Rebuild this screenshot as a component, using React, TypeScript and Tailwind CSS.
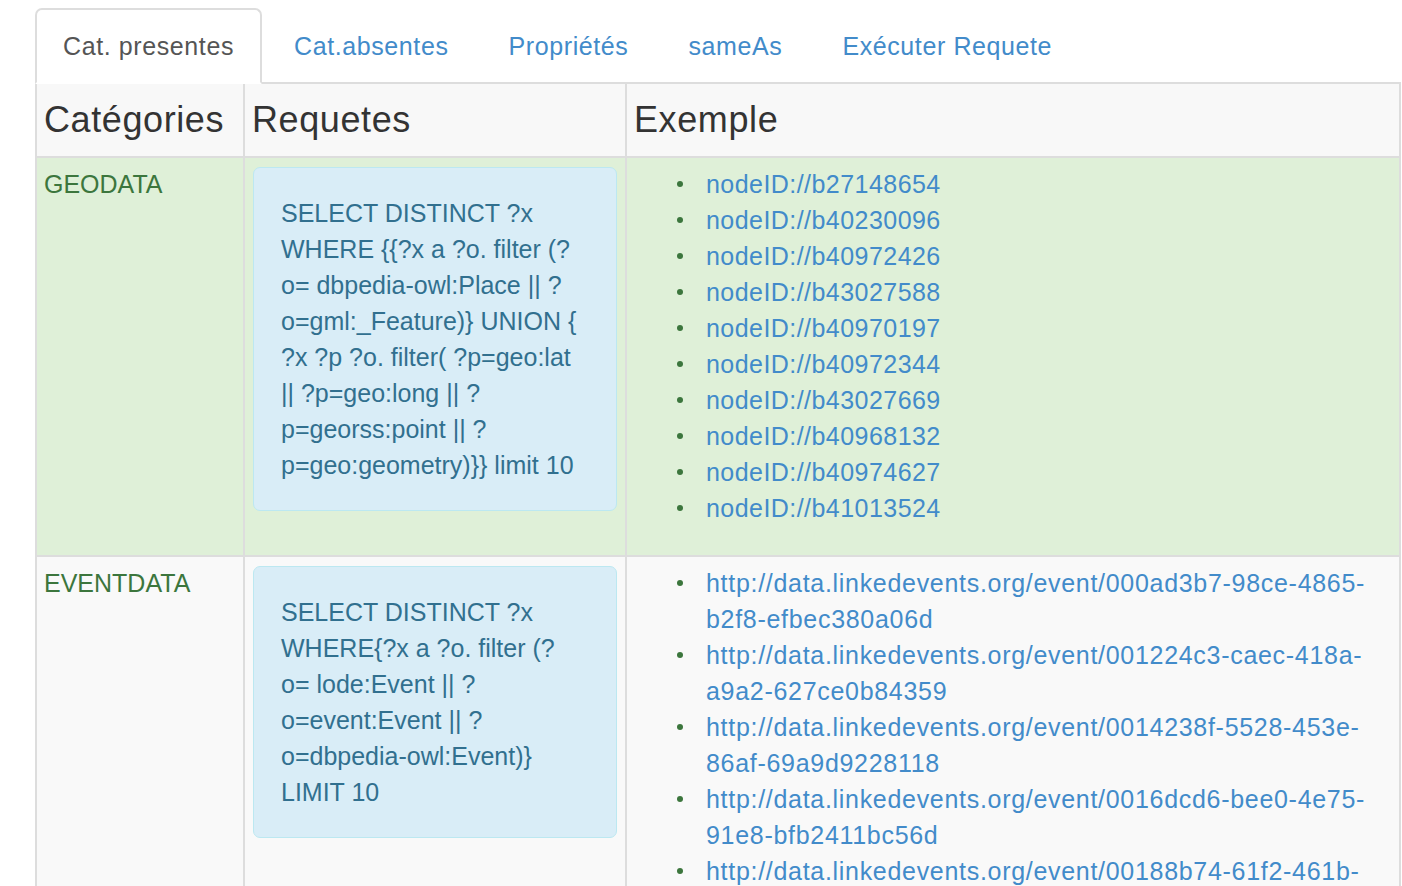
import React from 'react';

const TABS = ['Cat. presentes', 'Cat.absentes', 'Propriétés', 'sameAs', 'Exécuter Requete'];

const GEO_QUERY = [
  'SELECT DISTINCT ?x',
  'WHERE {{?x a ?o. filter (?',
  'o= dbpedia-owl:Place || ?',
  'o=gml:_Feature)} UNION {',
  '?x ?p ?o. filter( ?p=geo:lat',
  '|| ?p=geo:long || ?',
  'p=georss:point || ?',
  'p=geo:geometry)}} limit 10',
];

const EVENT_QUERY = [
  'SELECT DISTINCT ?x',
  'WHERE{?x a ?o. filter (?',
  'o= lode:Event || ?',
  'o=event:Event || ?',
  'o=dbpedia-owl:Event)}',
  'LIMIT 10',
];

const GEO_NODES = [
  'nodeID://b27148654',
  'nodeID://b40230096',
  'nodeID://b40972426',
  'nodeID://b43027588',
  'nodeID://b40970197',
  'nodeID://b40972344',
  'nodeID://b43027669',
  'nodeID://b40968132',
  'nodeID://b40974627',
  'nodeID://b41013524',
];

// wrapped the same way as the original page
const EVENT_LINKS = [
  ['http://data.linkedevents.org/event/000ad3b7-98ce-4865-', 'b2f8-efbec380a06d'],
  ['http://data.linkedevents.org/event/001224c3-caec-418a-', 'a9a2-627ce0b84359'],
  ['http://data.linkedevents.org/event/0014238f-5528-453e-', '86af-69a9d9228118'],
  ['http://data.linkedevents.org/event/0016dcd6-bee0-4e75-', '91e8-bfb2411bc56d'],
  ['http://data.linkedevents.org/event/00188b74-61f2-461b-', '9c4e-2d8a1f03b7c5'],
];

function QueryBox({ lines }: { lines: string[] }) {
  return (
    <div className="mb-[36px] mt-px rounded-[7px] border border-[#bce8f1] bg-[#d9edf7] p-[27px] text-[#31708f]">
      {lines.map((l, i) => (
        <div key={i} className="whitespace-nowrap">
          {l}
        </div>
      ))}
    </div>
  );
}

function Bullet() {
  return <span className="absolute -left-[29px] top-[15px] size-[6px] rounded-full bg-[#3c763d]" />;
}

const cell = 'border-2 border-[#ddd] px-[8px] pt-[8px] pb-[8px] align-top';

export default function App() {
  return (
    <div className="h-[886px] overflow-hidden bg-white font-['Liberation_Sans',Arial,sans-serif] text-[25px] leading-[36px] text-[#333]">
      <div className="ml-[35px] mr-px pt-[8px]">
        {/* Tabs */}
        <ul className="flex border-b-2 border-[#ddd]">
          {TABS.map((tab, i) => (
            <li key={tab} className="-mb-[2px] mr-[4px]">
              <a
                href="#"
                className={
                  i === 0
                    ? 'block rounded-t-[7px] border-2 border-[#ddd] border-b-transparent bg-white px-[26px] py-[18px] tracking-[0.6px] text-[#555]'
                    : 'block rounded-t-[7px] border-2 border-transparent px-[26px] py-[18px] tracking-[0.6px] text-[#428bca]'
                }
              >
                {tab}
              </a>
            </li>
          ))}
        </ul>

        {/* Table */}
        <table className="w-full table-fixed border-collapse">
          <colgroup>
            <col className="w-[208px]" />
            <col className="w-[382px]" />
            <col />
          </colgroup>
          <thead>
            <tr className="bg-[#f8f8f8]">
              {['Catégories', 'Requetes', 'Exemple'].map((h) => (
                <th
                  key={h}
                  className="h-[73px] border-2 border-t-0 border-[#ddd] px-[7px] text-left align-middle text-[36px] leading-[40px] font-normal tracking-[0.6px] text-[#333]"
                >
                  {h}
                </th>
              ))}
            </tr>
          </thead>
          <tbody>
            <tr className="bg-[#dff0d8]">
              <td className={cell + ' text-[#3c763d]'}>
                <span className="-ml-px">GEODATA</span>
              </td>
              <td className={cell}>
                <QueryBox lines={GEO_QUERY} />
              </td>
              <td className={cell}>
                <ul className="pl-[71px]">
                  {GEO_NODES.map((n) => (
                    <li key={n} className="relative">
                      <Bullet />
                      <a href="#" className="tracking-[0.45px] text-[#428bca]">
                        {n}
                      </a>
                    </li>
                  ))}
                </ul>
              </td>
            </tr>
            <tr className="bg-[#f9f9f9]">
              <td className={cell + ' text-[#3c763d]'}>
                <span className="-ml-px">EVENTDATA</span>
              </td>
              <td className={cell}>
                <QueryBox lines={EVENT_QUERY} />
              </td>
              <td className={cell}>
                <ul className="pl-[71px]">
                  {EVENT_LINKS.map(([a, b]) => (
                    <li key={a} className="relative">
                      <Bullet />
                      <a href="#" className="tracking-[0.7px] text-[#428bca]">
                        <span className="whitespace-nowrap">{a}</span>
                        <br />
                        <span className="whitespace-nowrap">{b}</span>
                      </a>
                    </li>
                  ))}
                </ul>
              </td>
            </tr>
          </tbody>
        </table>
      </div>
    </div>
  );
}
